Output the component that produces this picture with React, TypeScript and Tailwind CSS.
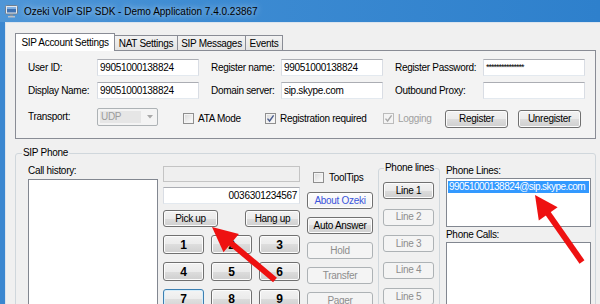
import React from "react";

const BTN =
  "flex items-center justify-center rounded-[3px] border border-[#707070] bg-[linear-gradient(to_bottom,#f2f2f2_0%,#ebebeb_50%,#dddddd_50%,#cfcfcf_100%)] shadow-[inset_0_0_0_1px_#fcfcfc] text-black leading-none whitespace-nowrap";
const BTN_DIS =
  "flex items-center justify-center rounded-[3px] border border-[#adb2b5] bg-[#f4f4f4] text-[#8d8d8d] leading-none whitespace-nowrap";
const BTN_FOCUS =
  "flex items-center justify-center rounded-[3px] border border-[#3c7fb1] bg-[linear-gradient(to_bottom,#f4f4f4_0%,#ededed_50%,#e0e0e0_50%,#d4d4d4_100%)] shadow-[inset_0_0_0_1px_#d6eefb] text-black leading-none whitespace-nowrap";
const INPUT =
  "h-[17px] border border-[#abadb3] border-x-[#d9dde4] border-b-[#e3e9ef] bg-white flex items-center px-[2px] leading-none whitespace-nowrap";
const LISTBOX = "border border-[#828790] bg-white";

function CheckBox({ checked = false, disabled = false }: { checked?: boolean; disabled?: boolean }) {
  return (
    <div
      className={
        disabled
          ? "w-[11px] h-[11px] shrink-0 border border-[#bcbcbc] bg-[#f4f4f4] flex items-center justify-center"
          : "w-[11px] h-[11px] shrink-0 border border-[#8f8f8f] bg-[linear-gradient(135deg,#d8d8d8,#ffffff)] shadow-[inset_0_0_0_1px_#f4f4f4] flex items-center justify-center"
      }
    >
      {checked && (
        <svg width="9" height="9" viewBox="0 0 9 9">
          <path
            d="M1.5 4.6 L3.6 7 L7.6 1.4"
            fill="none"
            stroke={disabled ? "#a9a9a9" : "#4b5d8e"}
            strokeWidth="1.4"
          />
        </svg>
      )}
    </div>
  );
}

function TitleIcon() {
  return (
    <svg width="13" height="14" viewBox="0 0 13 14">
      <rect x="0.5" y="1.5" width="12" height="8.5" rx="1" fill="#e4e9ef" stroke="#6f7f90" />
      <rect x="2" y="3" width="9" height="5.5" fill="#3f73b3" />
      <rect x="2" y="3" width="9" height="2" fill="#7fb0e4" />
      <rect x="5" y="10.5" width="3" height="1.5" fill="#8592a0" />
      <rect x="3" y="12" width="7" height="1.5" fill="#b7c0ca" />
    </svg>
  );
}

function Arrows() {
  return (
    <svg className="absolute left-0 top-0 pointer-events-none" width="600" height="304" viewBox="0 0 600 304">
      <line x1="275" y1="280" x2="229" y2="241.5" stroke="#ee1111" strokeWidth="6" />
      <polygon points="212,227 238.9,233.9 223.5,252.3" fill="#ee1111" />
      <line x1="582" y1="262" x2="547" y2="212" stroke="#ee1111" strokeWidth="6" />
      <polygon points="535,195 557.6,207.2 538.8,220.4" fill="#ee1111" />
    </svg>
  );
}

function Tabs() {
  return (
    <div className="flex items-end h-[17px]">
      <div className="relative z-10 h-[18px] -mb-px w-[100px] border border-b-0 border-[#898c95] bg-white flex items-center justify-center">
        SIP Account Settings
      </div>
      <div className="h-[15px] w-[63px] border-t border-r border-[#898c95] bg-[linear-gradient(to_bottom,#f3f3f3,#e3e3e3)] flex items-center justify-center">
        NAT Settings
      </div>
      <div className="h-[15px] w-[68px] border-t border-r border-[#898c95] bg-[linear-gradient(to_bottom,#f3f3f3,#e3e3e3)] flex items-center justify-center">
        SIP Messages
      </div>
      <div className="h-[15px] w-[37px] border-t border-r border-[#898c95] bg-[linear-gradient(to_bottom,#f3f3f3,#e3e3e3)] flex items-center justify-center">
        Events
      </div>
    </div>
  );
}

function TabPage() {
  return (
    <div className="w-[581px] h-[89px] border border-[#898c95] bg-[#f3f3f3] pt-[8px] pl-[12px]">
      <div className="flex items-center h-[17px]">
        <span className="w-[69px] shrink-0">User ID:</span>
        <div className={INPUT + " w-[102px] shrink-0"}>99051000138824</div>
        <span className="ml-[12px] w-[70px] shrink-0">Register name:</span>
        <div className={INPUT + " w-[102px] shrink-0"}>99051000138824</div>
        <span className="ml-[12px] w-[88px] shrink-0">Register Password:</span>
        <div className={INPUT + " w-[102px] shrink-0 text-[9px] tracking-[-1px]"}>***************</div>
      </div>
      <div className="flex items-center h-[17px] mt-[6px]">
        <span className="w-[69px] shrink-0">Display Name:</span>
        <div className={INPUT + " w-[102px] shrink-0"}>99051000138824</div>
        <span className="ml-[12px] w-[70px] shrink-0">Domain server:</span>
        <div className={INPUT + " w-[102px] shrink-0"}>sip.skype.com</div>
        <span className="ml-[12px] w-[88px] shrink-0">Outbound Proxy:</span>
        <div className={INPUT + " w-[102px] shrink-0"}></div>
      </div>
      <div className="flex items-start h-[20px] mt-[9px]">
        <span className="w-[69px] shrink-0 mt-[3px] leading-[12px]">Transport:</span>
        <div className="w-[61px] shrink-0 h-[18px] border border-[#adb2b5] rounded-[2px] bg-[#f4f4f4] flex items-center px-[2px]">
          <div className="w-[41px] h-[12px] bg-[#e6e6e6] text-[#9c9c9c] flex items-center pl-[1px] leading-none">UDP</div>
          <svg className="ml-[6px]" width="6" height="4" viewBox="0 0 6 4">
            <path d="M0 0 H6 L3 3.5 Z" fill="#a9a9a9" />
          </svg>
        </div>
        <div className="ml-[25px] w-[82px] shrink-0 mt-[5px] flex items-center">
          <CheckBox />
          <span className="ml-[4px] leading-none">ATA Mode</span>
        </div>
        <div className="w-[118px] shrink-0 mt-[5px] flex items-center">
          <CheckBox checked />
          <span className="ml-[4px] leading-none">Registration required</span>
        </div>
        <div className="w-[62px] shrink-0 mt-[5px] flex items-center">
          <CheckBox checked disabled />
          <span className="ml-[4px] leading-none text-[#a0a0a0]">Logging</span>
        </div>
        <div className={BTN + " shrink-0 mt-[2px] w-[63px] h-[18px]"}>Register</div>
        <div className={BTN + " shrink-0 mt-[2px] ml-[10px] w-[63px] h-[18px]"}>Unregister</div>
      </div>
    </div>
  );
}

function SipPhone() {
  const digits = ["1", "2", "3", "4", "5", "6", "7", "8", "9", "*", "0", "#"];
  return (
    <fieldset className="mt-[8px] w-[581px] h-[200px] border border-[#d0d7dc] rounded-[3px]">
      <legend className="ml-[6px] px-[1px] leading-[12px]">SIP Phone</legend>
      <div className="flex items-start pl-[12px]">
        <div className="w-[130px] shrink-0 flex flex-col">
          <span className="mt-[6px] leading-[12px]">Call history:</span>
          <div className={LISTBOX + " mt-[2px] h-[140px]"} />
        </div>

        <div className="ml-[5px] w-[137px] shrink-0 flex flex-col">
          <div className="mt-[7px] h-[16px] border border-[#c4c4c4] bg-[#efefef]" />
          <div className={INPUT + " mt-[5px] justify-end"}>0036301234567</div>
          <div className="mt-[6px] flex justify-between">
            <div className={BTN + " w-[55px] h-[17px]"}>Pick up</div>
            <div className={BTN + " w-[55px] h-[17px]"}>Hang up</div>
          </div>
          <div className="mt-[8px] grid grid-cols-3 gap-x-[7px] gap-y-[8px]">
            {digits.map((d) => (
              <div
                key={d}
                className={(d === "7" ? BTN_FOCUS : BTN) + " h-[19px] text-[12px] font-bold tracking-normal"}
              >
                {d}
              </div>
            ))}
          </div>
        </div>

        <div className="ml-[7px] w-[66px] shrink-0 flex flex-col">
          <div className="mt-[13px] h-[11px] flex items-center pl-[6px]">
            <CheckBox />
            <span className="ml-[5px] leading-none">ToolTips</span>
          </div>
          <div className="mt-[9px] flex flex-col gap-[8px]">
            <div className="flex items-center justify-center rounded-[3px] border border-[#707070] bg-[linear-gradient(to_bottom,#fdfdfd,#f1f1f1)] shadow-[inset_0_0_0_1px_#ffffff] text-[#3b55dc] leading-none h-[17px]">
              About Ozeki
            </div>
            <div className={BTN + " h-[17px]"}>Auto Answer</div>
            <div className={BTN_DIS + " h-[17px]"}>Hold</div>
            <div className={BTN_DIS + " h-[17px]"}>Transfer</div>
            <div className={BTN_DIS + " h-[17px]"}>Pager</div>
          </div>
        </div>

        <fieldset className="ml-[5px] mt-[3px] w-[62px] shrink-0 h-[160px] border border-[#d0d7dc] rounded-[3px] pl-[4px]">
          <legend className="ml-[1px] px-[1px] leading-[12px] whitespace-nowrap">Phone lines</legend>
          <div className="mt-[8px] w-[51px] flex flex-col gap-[9.5px]">
            <div className={BTN + " h-[17px]"}>Line 1</div>
            <div className={BTN_DIS + " h-[17px]"}>Line 2</div>
            <div className={BTN_DIS + " h-[17px]"}>Line 3</div>
            <div className={BTN_DIS + " h-[17px]"}>Line 4</div>
            <div className={BTN_DIS + " h-[17px]"}>Line 5</div>
          </div>
        </fieldset>

        <div className="ml-[6px] w-[145px] shrink-0 flex flex-col">
          <span className="mt-[6px] leading-[12px]">Phone Lines:</span>
          <div className={LISTBOX + " mt-[1px] h-[49px] px-[1px] pt-[2px]"}>
            <div className="h-[12px] bg-[#3399ff] text-white flex items-center pl-[1px] leading-none whitespace-nowrap overflow-hidden tracking-[-0.55px]">
              99051000138824@sip.skype.com
            </div>
          </div>
          <span className="mt-[2px] leading-[12px]">Phone Calls:</span>
          <div className={LISTBOX + " mt-[1px] h-[100px]"} />
        </div>
      </div>
    </fieldset>
  );
}

export default function App() {
  return (
    <div className="relative w-[600px] h-[304px] overflow-hidden bg-[#f0f0f0] font-['Liberation_Sans',Arial,sans-serif] text-[10px] tracking-[-0.3px] text-black select-none">
      <div className="h-[22px] flex items-center pl-[5px] bg-[linear-gradient(to_right,#4f96d7_0%,#3d8bd2_35%,#2e80cc_100%)]">
        <TitleIcon />
        <span className="ml-[6px] text-[10px] tracking-normal text-black [text-shadow:0_0_6px_rgba(255,255,255,0.8)]">
          Ozeki VoIP SIP SDK - Demo Application 7.4.0.23867
        </span>
      </div>
      <div className="flex h-[282px]">
        <div className="w-[5px] bg-[#3b87d0]" />
        <div className="flex-1 border-l border-t border-[#dbe4ee] pl-[9px] pt-[10px]">
          <Tabs />
          <TabPage />
          <SipPhone />
        </div>
      </div>
      <Arrows />
    </div>
  );
}
